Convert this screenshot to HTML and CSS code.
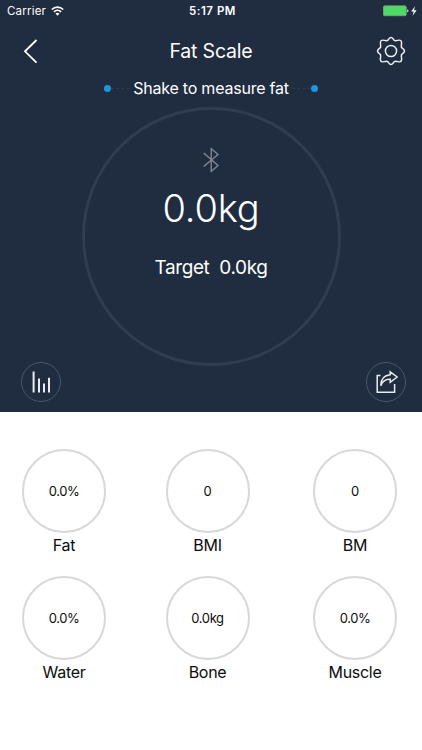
FILE: index.html
```html
<!DOCTYPE html>
<html lang="en">
<head>
    <meta charset="UTF-8">
    <meta name="viewport" content="width=device-width, initial-scale=1.0">
    <title>Fat Scale</title>
    <link rel="stylesheet" href="styles.css">
</head>
<body>
    <!-- Dark top panel -->
    <div class="panel">
        <div class="status-bar">
            <div class="carrier">
                <span class="carrier-name">Carrier</span>
                <svg class="wifi" width="13" height="10" viewBox="0 0 13 10" fill="none" stroke="#fff" stroke-width="1.7">
                    <path d="M0.8 3.5C4 0.3 9 0.3 12.2 3.5"/>
                    <path d="M2.9 5.8C5 3.8 8 3.8 10.1 5.8"/>
                    <path d="M4.5 7.6Q6.5 6 8.5 7.6L6.5 9.7Z" fill="#fff" stroke="none"/>
                </svg>
            </div>
            <span class="time">5:17 PM</span>
            <div class="battery">
                <svg width="34" height="12" viewBox="0 0 34 12">
                    <rect x="0.3" y="0.8" width="23" height="10" rx="1.5" fill="#4cd964" stroke="#83a894" stroke-width="0.6"/>
                    <path d="M24.2 4.2Q25.5 4.6 25.5 5.8T24.2 7.4Z" fill="#d5dae0"/>
                    <path d="M32 1.2L28.2 6.6H30.7L29.6 10.8L33.6 5.2H31Z" fill="#fff"/>
                </svg>
            </div>
        </div>

        <div class="nav">
            <svg class="back" width="16" height="26" viewBox="0 0 16 26" fill="none" stroke="#fff" stroke-width="1.8">
                <path d="M13.5 2L2 13.3L13.5 24.6"/>
            </svg>
            <h1>Fat Scale</h1>
            <svg class="gear" width="30" height="30" viewBox="0 0 30 30" fill="none" stroke="#eef0f4" stroke-width="1.5" stroke-linejoin="round">
                <circle cx="15" cy="15" r="5.6"/>
                <path d="M12.7 3.1Q15 -0.1 17.3 3.1Q18.3 5.1 20.4 4.6Q24.7 3.4 25.3 5.3Q26 7 25.3 9.6Q24.9 11.7 26.9 12.7Q30.1 15 26.9 17.3Q24.9 18.3 25.3 20.4Q26 23 25.3 24.7Q24.7 26.6 20.4 25.4Q18.3 24.9 17.3 26.9Q15 30.1 12.7 26.9Q11.7 24.9 9.6 25.4Q5.3 26.6 4.7 24.7Q4 23 4.7 20.4Q5.1 18.3 3.1 17.3Q-0.1 15 3.1 12.7Q5.1 11.7 4.7 9.6Q4 7 4.7 5.3Q5.3 3.4 9.6 4.6Q11.7 5.1 12.7 3.1Z"/>
            </svg>
        </div>

        <div class="hint">
            <span class="dot"></span>
            <span class="dash"></span>
            <span class="hint-text">Shake to measure fat</span>
            <span class="dash"></span>
            <span class="dot"></span>
        </div>

        <div class="stage">
            <div class="round-btn">
                <svg width="20" height="22" viewBox="0 0 20 22" fill="#e9ecf2">
                    <rect x="1.6" y="0.5" width="2" height="21"/>
                    <rect x="7" y="7.5" width="2" height="14"/>
                    <rect x="12" y="12.5" width="2" height="9"/>
                    <rect x="17" y="6.8" width="2" height="14.7"/>
                </svg>
            </div>
            <div class="dial">
                <svg class="bluetooth" width="16" height="26" viewBox="0 0 16 26" fill="none" stroke="#848b97" stroke-width="1.3">
                    <path d="M0.7 6L15 18.4L8.2 24.4V1.6L15 7.6L0.7 19.4"/>
                </svg>
                <div class="weight">0.0kg</div>
                <div class="target">Target  0.0kg</div>
            </div>
            <div class="round-btn share">
                <svg width="24" height="24" viewBox="0 0 24 24" fill="none" stroke="#e9ecf2" stroke-width="1.5">
                    <path d="M6.5 5.5H3.2V22.3H20.6V14"/>
                    <path d="M16.2 1.8L23.2 7L16.2 12.3V9.3Q9.6 8.8 6.8 15.7Q7 5.5 16.2 4.8Z"/>
                </svg>
            </div>
        </div>
    </div>

    <!-- Body readings -->
    <div class="readings">
        <div class="reading">
            <div class="ring">0.0%</div>
            <div class="label">Fat</div>
        </div>
        <div class="reading">
            <div class="ring">0</div>
            <div class="label">BMI</div>
        </div>
        <div class="reading">
            <div class="ring">0</div>
            <div class="label">BM</div>
        </div>
        <div class="reading">
            <div class="ring">0.0%</div>
            <div class="label">Water</div>
        </div>
        <div class="reading">
            <div class="ring">0.0kg</div>
            <div class="label">Bone</div>
        </div>
        <div class="reading">
            <div class="ring">0.0%</div>
            <div class="label">Muscle</div>
        </div>
    </div>
</body>
</html>
```
FILE: styles.css
```css
/* Global Styles */
* {
    box-sizing: border-box;
}

body {
    margin: 0;
    background: #fff;
    color: #0c0c0c;
    font-family: Inter, "Liberation Sans", sans-serif;
    overflow: hidden;
}

svg {
    display: block;
}

/* Top Panel */
.panel {
    height: 412px;
    background: #202c40;
    color: #fff;
}

.status-bar {
    display: grid;
    grid-template-columns: 1fr auto 1fr;
    align-items: center;
    height: 22px;
    padding: 0 5px 0 7px;
    font-size: 11.5px;
    line-height: 22px;
}

.carrier {
    display: flex;
    align-items: center;
    gap: 5px;
}

.carrier-name {
    letter-spacing: 0.2px;
}

.time {
    padding-left: 1px;
    font-weight: 600;
    letter-spacing: 0.5px;
}

.battery {
    justify-self: end;
}

.nav {
    display: grid;
    grid-template-columns: 1fr auto 1fr;
    align-items: center;
    height: 58px;
    padding: 0 16px;
}

.nav h1 {
    margin: 0;
    font-size: 19.5px;
    font-weight: 400;
    letter-spacing: -0.2px;
}

.back {
    margin-left: 7px;
}

.gear {
    justify-self: end;
}

/* Hint Line */
.hint {
    display: flex;
    justify-content: center;
    align-items: center;
    height: 16px;
}

.hint-text {
    margin: 0 3px;
    font-size: 16px;
    line-height: 16px;
    letter-spacing: -0.22px;
}

.dot {
    width: 7px;
    height: 7px;
    border-radius: 50%;
    background: #1f96e0;
}

.dash {
    width: 19px;
    border-top: 1px dashed #2e3a4d;
}

/* Weight Dial */
.stage {
    display: grid;
    grid-template-columns: 60.5px 259px 1fr;
    align-items: end;
    height: 316px;
    padding: 11px 16px 10px 21px;
}

.dial {
    display: flex;
    flex-direction: column;
    align-items: center;
    align-self: start;
    height: 259px;
    padding-top: 37px;
    border: 3px solid #303c50;
    border-radius: 50%;
}

.weight {
    margin-top: 12px;
    font-size: 38px;
    font-weight: 300;
    line-height: 46px;
    letter-spacing: -0.2px;
}

.target {
    margin-top: 25px;
    font-size: 19px;
    line-height: 24px;
    letter-spacing: -0.38px;
    white-space: pre;
}

.round-btn {
    display: flex;
    justify-content: center;
    align-items: center;
    width: 40px;
    height: 40px;
    border: 1px solid #4b5667;
    border-radius: 50%;
}

.share {
    justify-self: end;
}

/* Readings */
.readings {
    display: grid;
    grid-template-columns: 143.5px 147.5px 84px;
    row-gap: 20px;
    padding: 37px 0 0 22px;
}

.reading {
    display: flex;
    flex-direction: column;
    align-items: center;
    width: 84px;
}

.ring {
    display: flex;
    justify-content: center;
    align-items: center;
    width: 84px;
    height: 84px;
    border: 2px solid #d8d8da;
    border-radius: 50%;
    font-size: 13px;
    letter-spacing: -0.4px;
}

.label {
    margin-top: 1px;
    font-size: 16px;
    line-height: 22px;
    letter-spacing: -0.3px;
}
```
